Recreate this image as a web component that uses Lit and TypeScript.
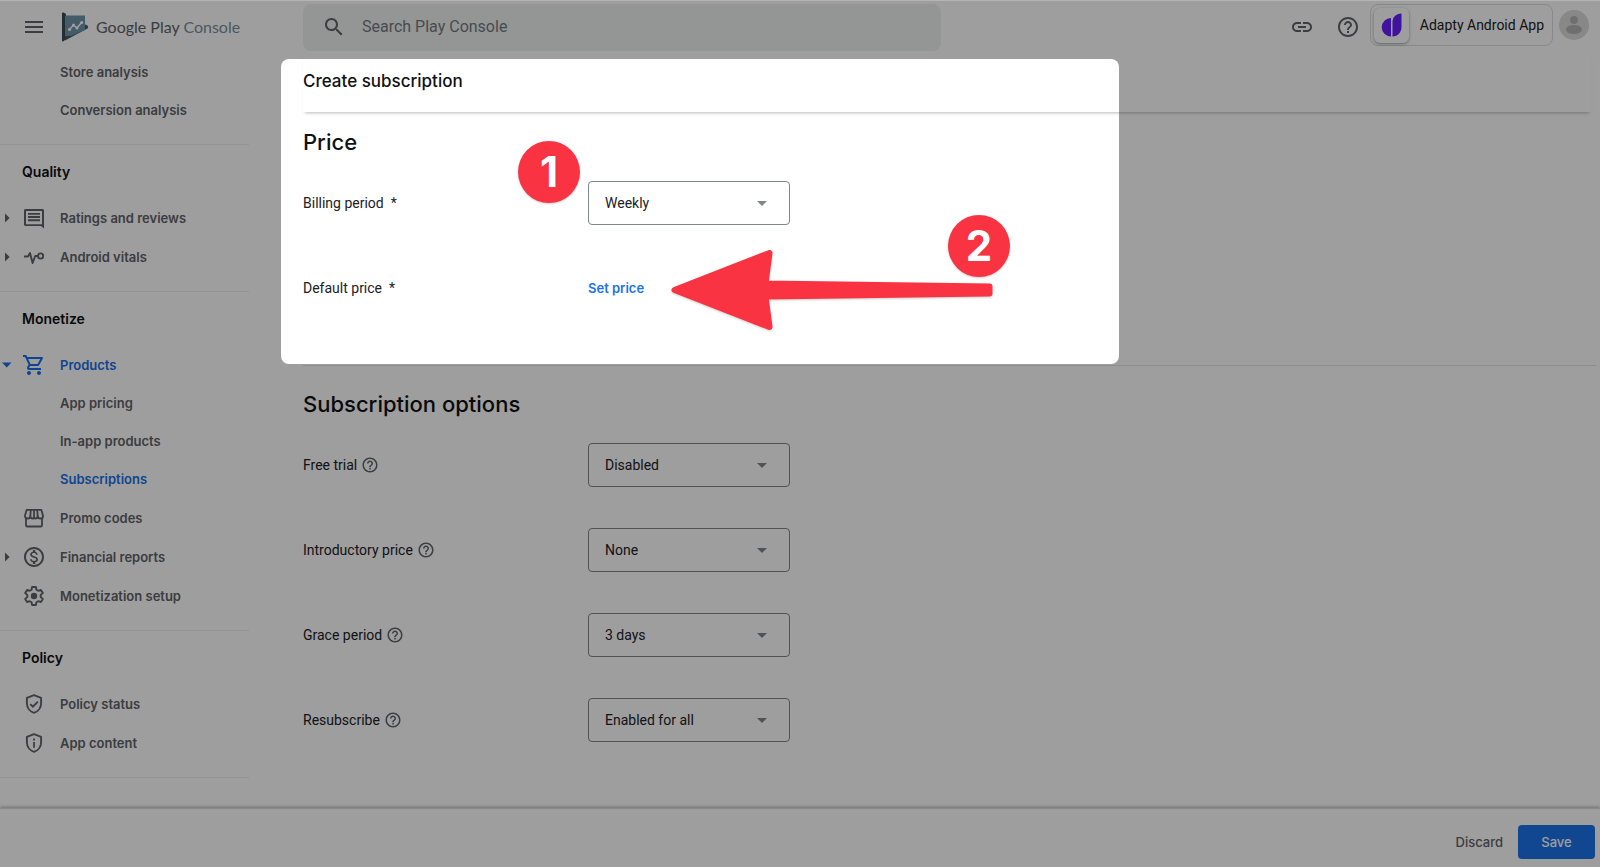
import { LitElement, html, css, svg, nothing } from "lit";
import { customElement, property } from "lit/decorators.js";
import { classMap } from "lit/directives/class-map.js";

const HELP =
  "M11 18h2v-2h-2v2zm1-16C6.48 2 2 6.48 2 12s4.48 10 10 10 10-4.48 10-10S17.52 2 12 2zm0 18c-4.41 0-8-3.59-8-8s3.59-8 8-8 8 3.59 8 8-3.59 8-8 8zm0-14c-2.21 0-4 1.79-4 4h2c0-1.1.9-2 2-2s2 .9 2 2c0 2-3 1.75-3 5h2c0-2.25 3-2.5 3-5 0-2.21-1.79-4-4-4z";
const SHIELD = "M12 3.1 4.9 5.8v5.4c0 4.6 3 8.4 7.1 9.6 4.1-1.2 7.1-5 7.1-9.6V5.8z";

const ICONS: Record<string, unknown> = {
  menu: svg`<path d="M3 6h18v2H3zM3 11h18v2H3zM3 16h18v2H3z"/>`,
  search: svg`<path d="M15.5 14h-.79l-.28-.27C15.41 12.59 16 11.11 16 9.5 16 5.91 13.09 3 9.5 3S3 5.91 3 9.5 5.91 16 9.5 16c1.61 0 3.09-.59 4.23-1.57l.27.28v.79l5 4.99L20.49 19l-4.99-5zm-6 0C7.01 14 5 11.99 5 9.5S7.01 5 9.5 5 14 7.01 14 9.5 11.99 14 9.5 14z"/>`,
  link: svg`<path d="M3.9 12c0-1.71 1.39-3.1 3.1-3.1h4V7H7c-2.76 0-5 2.24-5 5s2.24 5 5 5h4v-1.9H7c-1.71 0-3.1-1.39-3.1-3.1zM8 13h8v-2H8v2zm9-6h-4v1.9h4c1.71 0 3.1 1.39 3.1 3.1s-1.39 3.1-3.1 3.1h-4V17h4c2.76 0 5-2.24 5-5s-2.24-5-5-5z"/>`,
  help: svg`<path d=${HELP} />`,
  comment: svg`<path d="M22 4.5c0-.8-.7-1.5-1.5-1.5h-17C2.7 3 2 3.7 2 4.5v14c0 .8.7 1.5 1.5 1.5H19l3 2.5zM20 5v13.2H4V5zM6 13.3h12v1.9H6zm0-3.2h12V12H6zm0-3.2h12v1.9H6z"/>`,
  vitals: svg`<path d="M2 11.5h4L8 8l2.6 10L13.2 11h2.4" fill="none" stroke="currentColor" stroke-width="1.9" stroke-linejoin="round"/><circle cx="18.6" cy="11" r="2.6" fill="none" stroke="currentColor" stroke-width="1.9"/>`,
  cart: svg`<path d="M15.55 13c.75 0 1.41-.41 1.75-1.03l3.58-6.49c.37-.66-.11-1.48-.87-1.48H5.21l-.94-2H1v2h2l3.6 7.59-1.35 2.44C4.52 15.37 5.48 17 7 17h12v-2H7l1.1-2h7.45zM6.16 6h12.15l-2.76 5H8.53L6.16 6zM7 18c-1.1 0-1.99.9-1.99 2S5.9 22 7 22s2-.9 2-2-.9-2-2-2zm10 0c-1.1 0-1.99.9-1.99 2s.89 2 1.99 2 2-.9 2-2-.9-2-2-2z"/>`,
  store: svg`<g fill="none" stroke="currentColor" stroke-width="1.8" stroke-linejoin="round"><path d="M4 12.2V19.6c0 .5.4.9.9.9h14.2c.5 0 .9-.4.9-.9V12.2"/><path d="M4.6 3.9h14.8l1.7 6c0 1.5-1.2 2.6-2.7 2.6a2.6 2.6 0 0 1-2.7-2.4 2.6 2.6 0 0 1-2.6 2.4c-.5 0-1-.1-1.1-.3-.1.2-.6.3-1.1.3a2.6 2.6 0 0 1-2.6-2.4 2.6 2.6 0 0 1-2.7 2.4c-1.5 0-2.7-1.1-2.7-2.6z"/><path d="M8.8 4l-.5 6.1M12 4v8M15.2 4l.5 6.1"/></g>`,
  dollar: svg`<path d="M12 2C6.48 2 2 6.48 2 12s4.48 10 10 10 10-4.48 10-10S17.52 2 12 2zm0 18c-4.41 0-8-3.59-8-8s3.59-8 8-8 8 3.59 8 8-3.59 8-8 8zm.31-8.86c-1.77-.45-2.34-.94-2.34-1.67 0-.84.79-1.43 2.1-1.43 1.38 0 1.9.66 1.94 1.64h1.71c-.05-1.34-.87-2.57-2.49-2.97V5H10.9v1.69c-1.51.32-2.72 1.3-2.72 2.81 0 1.79 1.49 2.69 3.66 3.21 1.95.46 2.34 1.15 2.34 1.87 0 .53-.39 1.39-2.1 1.39-1.6 0-2.23-.72-2.32-1.64H8.04c.1 1.7 1.36 2.66 2.86 2.97V19h2.34v-1.67c1.52-.29 2.72-1.16 2.73-2.77-.01-2.2-1.9-2.96-3.66-3.42z"/>`,
  gear: svg`<path d="M10.1 3h3.8l.5 2.7 1.9 1.1 2.6-.9 1.9 3.2-2.1 1.8v2.2l2.1 1.8-1.9 3.2-2.6-.9-1.9 1.1-.5 2.7h-3.8l-.5-2.7-1.9-1.1-2.6.9-1.9-3.2 2.1-1.8v-2.2L3.2 9.1l1.9-3.2 2.6.9 1.9-1.1z" fill="none" stroke="currentColor" stroke-width="1.9" stroke-linejoin="round"/><circle cx="12" cy="12" r="3.2"/>`,
  shieldCheck: svg`<path d=${SHIELD} fill="none" stroke="currentColor" stroke-width="1.9" stroke-linejoin="round"/><path d="M8.2 12.1l2.7 2.6 5-5.1" fill="none" stroke="currentColor" stroke-width="1.9"/>`,
  shieldInfo: svg`<path d=${SHIELD} fill="none" stroke="currentColor" stroke-width="1.9" stroke-linejoin="round"/><path d="M11.1 7.5h1.8v1.9h-1.8zM11.1 10.9h1.8v5.8h-1.8z"/>`,
};

@customElement("gp-icon")
class GpIcon extends LitElement {
  @property() name = "";

  static styles = css`
    :host {
      display: inline-flex;
      width: 24px;
      height: 24px;
      flex: none;
    }
    .glyph {
      width: 100%;
      height: 100%;
      fill: currentColor;
    }
  `;

  render() {
    return html`<svg class="glyph" viewBox="0 0 24 24" aria-hidden="true">${ICONS[this.name]}</svg>`;
  }
}

@customElement("gp-topbar")
class GpTopbar extends LitElement {
  static styles = css`
    :host {
      display: flex;
      align-items: center;
      height: 52px;
      flex: none;
      color: #5f6368;
    }
    .brand {
      display: flex;
      align-items: center;
      width: 303px;
      box-sizing: border-box;
      padding-left: 22px;
      flex: none;
    }
    .icon-button {
      display: inline-flex;
      padding: 0;
      border: 0;
      background: none;
      color: inherit;
    }
    .logo {
      width: 28px;
      height: 30px;
      margin-left: 15px;
    }
    .wordmark {
      margin-left: 7px;
      font: 400 16px/24px Lato, sans-serif;
      color: #5f6368;
      text-decoration: none;
      white-space: nowrap;
    }
    .product {
      color: #78909c;
    }
    .search {
      display: flex;
      align-items: center;
      gap: 16px;
      flex: 0 1 638px;
      height: 47px;
      box-sizing: border-box;
      padding: 0 19px;
      border-radius: 8px;
      background: #eef2f1;
    }
    .query {
      flex: 1;
      min-width: 0;
      padding: 0;
      border: 0;
      background: none;
      outline: none;
      font: 400 16px/24px Roboto, sans-serif;
      color: #202124;
    }
    .query::placeholder {
      color: #757a7f;
      opacity: 1;
    }
    .tools {
      display: flex;
      align-items: center;
      margin-left: auto;
      padding: 0 11px 0 22px;
    }
    .tools .icon-button {
      margin-right: 22px;
    }
    .tools .icon-button + .icon-button {
      margin-right: 10px;
    }
    .account {
      display: flex;
      align-items: center;
      gap: 6px;
      padding-bottom: 4px;
    }
    .app {
      display: flex;
      align-items: center;
      gap: 11px;
      height: 42px;
      padding: 0 8px 0 3px;
      border: 1px solid #dadce0;
      border-radius: 8px;
      background: none;
      font: 400 14px/20px Roboto, sans-serif;
      color: #202124;
      white-space: nowrap;
    }
    .app-icon {
      display: flex;
      width: 35px;
      height: 35px;
      border-radius: 6px;
      background: #fff;
      box-shadow: 0 1px 3px rgba(60, 64, 67, 0.5);
    }
    .avatar {
      width: 30px;
      height: 30px;
      flex: none;
    }
  `;

  render() {
    return html`
      <div class="brand">
        <button class="icon-button" aria-label="Menu"><gp-icon name="menu"></gp-icon></button>
        <svg class="logo" viewBox="0 0 28 30" aria-hidden="true">
          <path d="M1 1.5Q1 0 2.5.6L5 2v25L2.5 29.3Q1 30 1 28.5z" fill="#37474f" />
          <path d="M4 22 L23 12 26.5 13.6Q28 15 26.5 16.4L4 28.5z" fill="#455a64" />
          <path d="M4 3.5h20v14.5L10 24H4z" fill="#6f93a8" />
          <path d="M8.5 17.5 12.5 13l3.5 3 5-6" fill="none" stroke="#fff" stroke-width="1.5" />
          <g fill="#fff">
            <circle cx="8.5" cy="17.5" r="1.6" /><circle cx="12.5" cy="13" r="1.5" />
            <circle cx="16" cy="16" r="1.5" /><circle cx="20.7" cy="10.5" r="1.6" />
          </g>
        </svg>
        <a class="wordmark" href="#home">Google Play <span class="product">Console</span></a>
      </div>
      <label class="search">
        <gp-icon name="search"></gp-icon>
        <input class="query" type="search" placeholder="Search Play Console" aria-label="Search Play Console" />
      </label>
      <div class="tools">
        <button class="icon-button" aria-label="Copy link"><gp-icon name="link"></gp-icon></button>
        <button class="icon-button" aria-label="Help"><gp-icon name="help"></gp-icon></button>
        <div class="account">
          <button class="app">
            <svg class="app-icon" viewBox="0 0 35 35" aria-hidden="true">
              <path d="M17 10v18.5a9.2 9.2 0 0 1 0-18.5z" fill="#6720ff" />
              <path d="M18.5 14c0-4.5 3.5-8.5 9-8.5v13.5c0 5.5-4 9.5-9 9.5z" fill="#6720ff" />
            </svg>
            Adapty Android App
          </button>
          <svg class="avatar" viewBox="0 0 30 30" aria-hidden="true">
            <circle cx="15" cy="15" r="15" fill="#dcdcdc" />
            <circle cx="15" cy="10" r="4" fill="#b4b4b4" />
            <ellipse cx="15" cy="19.5" rx="8" ry="4.5" fill="#b4b4b4" />
          </svg>
        </div>
      </div>
    `;
  }
}

type NavItem = { label: string; icon?: string; arrow?: "right" | "down"; active?: boolean };
type NavGroup = { title?: string; items: NavItem[] };

const NAV: NavGroup[] = [
  { items: [{ label: "Store analysis" }, { label: "Conversion analysis" }] },
  {
    title: "Quality",
    items: [
      { label: "Ratings and reviews", icon: "comment", arrow: "right" },
      { label: "Android vitals", icon: "vitals", arrow: "right" },
    ],
  },
  {
    title: "Monetize",
    items: [
      { label: "Products", icon: "cart", arrow: "down", active: true },
      { label: "App pricing" },
      { label: "In-app products" },
      { label: "Subscriptions", active: true },
      { label: "Promo codes", icon: "store" },
      { label: "Financial reports", icon: "dollar", arrow: "right" },
      { label: "Monetization setup", icon: "gear" },
    ],
  },
  {
    title: "Policy",
    items: [
      { label: "Policy status", icon: "shieldCheck" },
      { label: "App content", icon: "shieldInfo" },
    ],
  },
];

@customElement("gp-sidebar")
class GpSidebar extends LitElement {
  static styles = css`
    :host {
      display: block;
      width: 249px;
      flex: none;
      font: 600 13px/20px Inter, sans-serif;
    }
    .group {
      padding-bottom: 15px;
      border-bottom: 1px solid #ebedef;
    }
    .title {
      margin: 0;
      padding-left: 22px;
      font-size: 14px;
      font-weight: 600;
      line-height: 53px;
      color: #101113;
    }
    .item {
      display: grid;
      grid-template-columns: 22px 38px 1fr;
      align-items: center;
      height: 38px;
      color: #5f6368;
      text-decoration: none;
      white-space: nowrap;
    }
    .with-icon {
      height: 39px;
    }
    .active {
      color: #1a6fe8;
    }
    .arrow {
      width: 10px;
      height: 10px;
      margin-left: 2px;
      fill: currentColor;
    }
    .label {
      grid-column: 3;
    }
  `;

  private item(it: NavItem) {
    const cls = classMap({ item: true, "with-icon": !!it.icon, active: !!it.active });
    const arrow =
      it.arrow === "down"
        ? svg`<path d="M0 2.5h9.5L4.75 7.5z"/>`
        : svg`<path d="M3 .4v9.2L7.6 5z"/>`;
    return html`<a class=${cls} href="#nav">
      ${it.arrow ? html`<svg class="arrow" viewBox="0 0 10 10" aria-hidden="true">${arrow}</svg>` : it.icon ? html`<span></span>` : nothing}
      ${it.icon ? html`<gp-icon name=${it.icon}></gp-icon>` : nothing}
      <span class="label">${it.label}</span>
    </a>`;
  }

  render() {
    return html`<nav aria-label="Main">
      ${NAV.map(
        (g) => html`<section class="group">
          ${g.title ? html`<h2 class="title">${g.title}</h2>` : nothing} ${g.items.map((i) => this.item(i))}
        </section>`,
      )}
    </nav>`;
  }
}

@customElement("gp-form")
class GpForm extends LitElement {
  static styles = css`
    :host {
      display: block;
      flex: 1;
      min-width: 0;
      padding: 0 4px 60px 54px;
      font: 400 14px/20px Roboto, sans-serif;
      color: #202124;
    }
    .page-title {
      margin: 0 5px 0 0;
      padding: 16px 0 19px;
      font: 500 17px/24px Inter, sans-serif;
      color: #101113;
      box-shadow: 0 3px 3px -2px rgba(60, 64, 67, 0.35);
    }
    .section {
      padding-top: 14px;
    }
    .section + .section {
      margin-top: 55px;
      padding-top: 22px;
      border-top: 1px solid #e4e6e9;
    }
    .heading {
      margin: 0 0 23px;
      font: 500 22px/32px Inter, sans-serif;
      color: #101113;
    }
    .rows {
      display: grid;
      gap: 41px;
    }
    .row {
      display: grid;
      grid-template-columns: 285px 202px;
      align-items: center;
      height: 44px;
    }
    .name {
      display: flex;
      align-items: center;
      gap: 4px;
    }
    .required {
      margin-left: 3px;
    }
    .hint {
      width: 18px;
      height: 18px;
      color: #5f6368;
    }
    .picker {
      position: relative;
      display: grid;
      align-items: center;
    }
    .select {
      appearance: none;
      width: 100%;
      height: 44px;
      padding: 0 40px 0 16px;
      border: 1px solid #80868b;
      border-radius: 4px;
      background: none;
      font: inherit;
      color: inherit;
    }
    .caret {
      position: absolute;
      right: 23px;
      width: 10px;
      height: 5px;
      fill: #80868b;
      pointer-events: none;
    }
    .set-price {
      justify-self: start;
      padding: 0;
      border: 0;
      background: none;
      font: 600 13px/20px Inter, sans-serif;
      color: #1a73e8;
    }
  `;

  private picker(id: string, label: string, value: string, required = false) {
    return html`<div class="row">
      <div class="name">
        <label for=${id}>${label}</label>
        ${required ? html`<span class="required">*</span>` : html`<gp-icon class="hint" name="help"></gp-icon>`}
      </div>
      <div class="picker">
        <select class="select" id=${id}>
          <option>${value}</option>
        </select>
        <svg class="caret" viewBox="0 0 10 5" aria-hidden="true"><path d="M0 0h10L5 5z" /></svg>
      </div>
    </div>`;
  }

  render() {
    return html`
      <h1 class="page-title">Create subscription</h1>
      <section class="section">
        <h2 class="heading">Price</h2>
        <div class="rows">
          ${this.picker("period", "Billing period", "Weekly", true)}
          <div class="row">
            <div class="name">
              <label for="price">Default price</label><span class="required">*</span>
            </div>
            <button class="set-price" id="price">Set price</button>
          </div>
        </div>
      </section>
      <section class="section">
        <h2 class="heading">Subscription options</h2>
        <div class="rows">
          ${this.picker("trial", "Free trial", "Disabled")}
          ${this.picker("intro", "Introductory price", "None")}
          ${this.picker("grace", "Grace period", "3 days")}
          ${this.picker("resub", "Resubscribe", "Enabled for all")}
        </div>
      </section>
    `;
  }
}

/* Tutorial layer: dims the console except one lit panel, and numbers the steps. */
@customElement("gp-spotlight")
class GpSpotlight extends LitElement {
  static styles = css`
    :host {
      position: absolute;
      top: 58px;
      left: 281px;
      width: 838px;
      height: 305px;
      border-radius: 8px;
      box-shadow: 0 0 0 200vmax rgba(0, 0, 0, 0.38);
      pointer-events: none;
    }
    .step {
      position: absolute;
      display: grid;
      place-items: center;
      width: 62px;
      height: 62px;
      border-radius: 50%;
      background: #fa3342;
      box-shadow: 0 1px 2px rgba(0, 0, 0, 0.2);
      font: 700 42px/62px Inter, sans-serif;
      color: #fff;
    }
    .first {
      top: 82px;
      left: 237px;
    }
    .second {
      top: 156px;
      left: 667px;
    }
    .pointer {
      position: absolute;
      top: 186px;
      left: 386px;
      width: 330px;
      height: 90px;
      fill: #fa3342;
      stroke: #fa3342;
      stroke-width: 6px;
      stroke-linejoin: round;
      filter: drop-shadow(0 1px 1px rgba(0, 0, 0, 0.2));
    }
  `;

  render() {
    return html`
      <span class="step first">1</span>
      <svg class="pointer" viewBox="0 0 330 90" aria-hidden="true">
        <path d="M7.5 45 102.5 8 98.5 38.5 322.5 41.5V48.5L98.5 51.5 102.5 82z" />
      </svg>
      <span class="step second">2</span>
    `;
  }
}

@customElement("app-root")
class AppRoot extends LitElement {
  static styles = css`
    :host {
      position: relative;
      display: flex;
      flex-direction: column;
      box-sizing: border-box;
      min-height: 100vh;
      overflow: hidden;
      border-top: 1px solid #b4b4b4;
      background: #fff;
    }
    .body {
      display: flex;
      flex: 1;
    }
    .actions {
      display: flex;
      align-items: center;
      justify-content: flex-end;
      gap: 15px;
      padding: 16px 5px 8px;
      border-top: 1px solid #dadce0;
      box-shadow: 0 -1px 3px rgba(60, 64, 67, 0.4);
    }
    .button {
      height: 34px;
      padding: 0;
      border: 0;
      border-radius: 4px;
      background: none;
      font: 500 13px/20px Inter, sans-serif;
      color: #5f6368;
    }
    .primary {
      width: 77px;
      background: #1a73e8;
      color: #fff;
    }
  `;

  render() {
    return html`
      <gp-topbar></gp-topbar>
      <div class="body">
        <gp-sidebar></gp-sidebar>
        <gp-form></gp-form>
      </div>
      <footer class="actions">
        <button class="button">Discard</button>
        <button class="button primary">Save</button>
      </footer>
      <gp-spotlight></gp-spotlight>
    `;
  }
}
